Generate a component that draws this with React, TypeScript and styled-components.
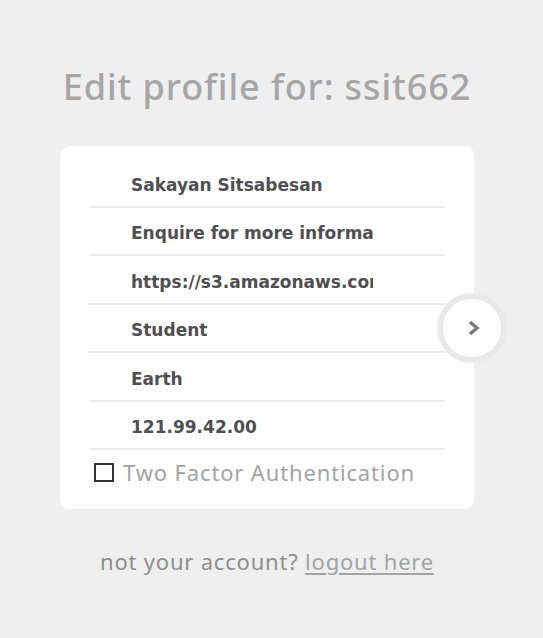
import React from "react";
import styled, { createGlobalStyle } from "styled-components";

const Global = createGlobalStyle`
  html, body { margin: 0; padding: 0; background: #efefef; }
  body { font-family: "Noto Sans", sans-serif; }
`;

const Page = styled.div`
  width: 543px;
  min-height: 638px;
  box-sizing: border-box;
  padding: 62px 9px 0 0;
  display: flex;
  flex-direction: column;
  align-items: center;
`;

const Title = styled.h1`
  margin: 0;
  font-family: "Noto Sans", sans-serif;
  font-weight: 500;
  font-size: 36px;
  line-height: 50px;
  color: #a6a6a6;
  letter-spacing: 0.9px;
`;

const Card = styled.div`
  position: relative;
  margin-top: 34px;
  width: 414px;
  box-sizing: border-box;
  background: #fff;
  border-radius: 10px;
  padding: 13px 29px 24px;
  display: flex;
  flex-direction: column;
`;

const Field = styled.input`
  display: block;
  width: 100%;
  box-sizing: border-box;
  height: 48.5px;
  border: none;
  border-bottom: 2px solid #ececec;
  background: transparent;
  padding: 5px 72px 0 42px;
  font-family: "DejaVu Sans", Tahoma, sans-serif;
  font-weight: bold;
  font-size: 17px;
  color: #4f4f52;
  outline: none;
`;

const CheckRow = styled.label`
  display: flex;
  align-items: center;
  gap: 9px;
  padding: 9px 0 0 5px;
  font-family: "Noto Sans", sans-serif;
  font-size: 22px;
  line-height: 26px;
  letter-spacing: 0.85px;
  color: #a3a3a3;
`;

const Box = styled.span`
  width: 16px;
  height: 15px;
  border: 2px solid #333;
  background: #fff;
  flex: none;
`;

const NextButton = styled.button`
  position: absolute;
  top: 147px;
  right: -33px;
  width: 70px;
  height: 70px;
  box-sizing: border-box;
  border-radius: 50%;
  border: 6px solid #e9e9e9;
  background: #fff;
  display: flex;
  align-items: center;
  justify-content: center;
  padding: 0 0 0 4px;
  cursor: pointer;
`;

const Footer = styled.p`
  margin: 37px 0 0;
  font-family: "Noto Sans", sans-serif;
  font-size: 22px;
  line-height: 30px;
  letter-spacing: 0.8px;
  color: #8f8f8f;
`;

const Link = styled.a`
  color: #a3a3a3;
  text-decoration: underline;
  text-underline-offset: 3px;
`;

const values = [
  "Sakayan Sitsabesan",
  "Enquire for more information",
  "https://s3.amazonaws.com/profile.png",
  "Student",
  "Earth",
  "121.99.42.00",
];

export default function App() {
  return (
    <>
      <Global />
      <Page>
        <Title>Edit profile for: ssit662</Title>
        <Card>
          {values.map((v) => (
            <Field key={v} defaultValue={v} />
          ))}
          <CheckRow>
            <Box />
            Two Factor Authentication
          </CheckRow>
          <NextButton aria-label="next">
            <svg width="14" height="16" viewBox="0 0 14 16">
              <path d="M3 2 L10 8 L3 14" fill="none" stroke="#777" strokeWidth="3.2" />
            </svg>
          </NextButton>
        </Card>
        <Footer>
          not your account? <Link href="#">logout here</Link>
        </Footer>
      </Page>
    </>
  );
}
